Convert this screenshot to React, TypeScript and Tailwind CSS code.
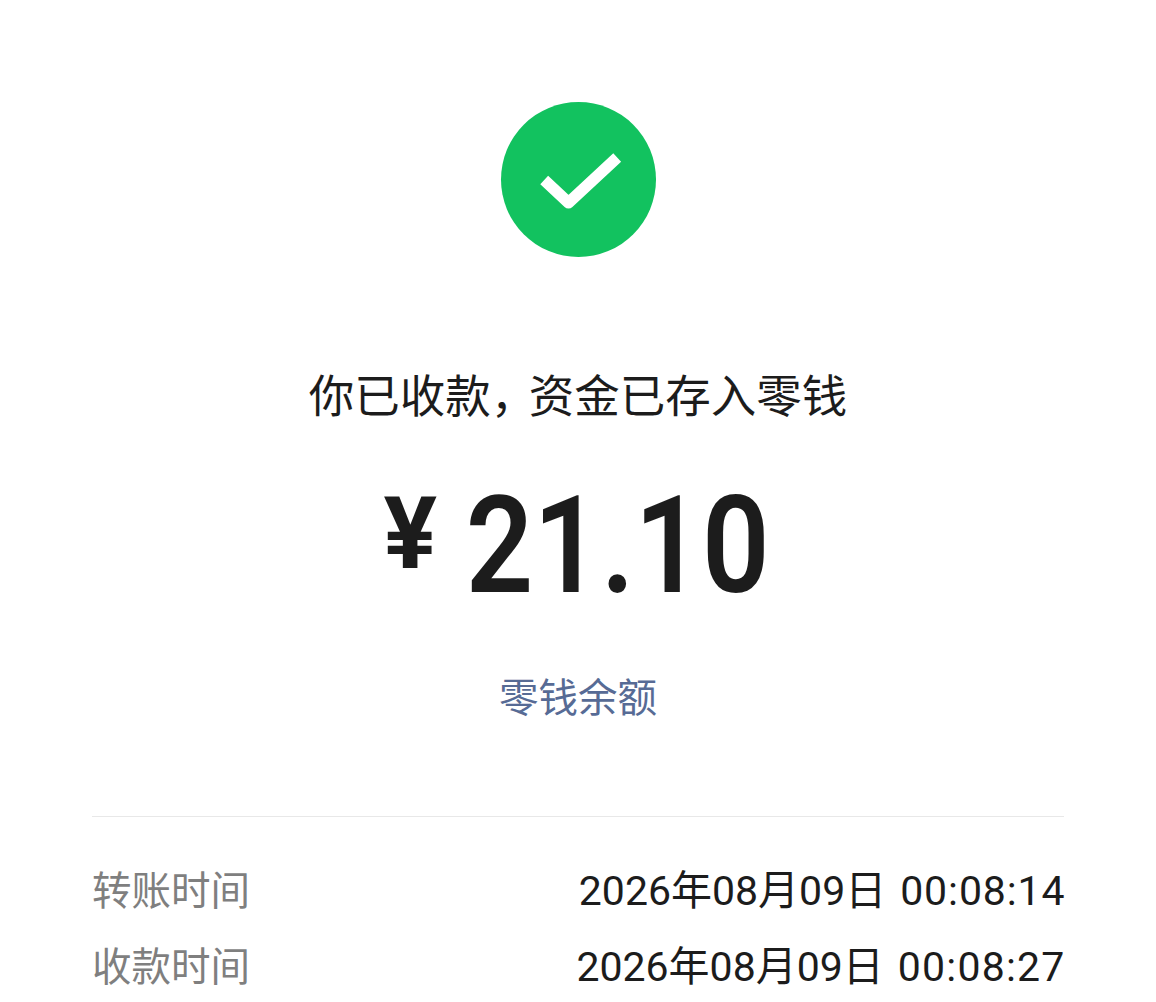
const cjk = "font-['Roboto','Noto_Sans_CJK_SC',sans-serif]";

const rows = [
  { label: "转账时间", date: "2026年08月09日", time: "00:08:14", tracking: "tracking-[0.9px]" },
  { label: "收款时间", date: "2026年08月09日", time: "00:08:27", tracking: "tracking-[1.2px]" },
];

export default function App() {
  return (
    <div className={`h-[1002px] w-full overflow-hidden bg-white ${cjk}`}>
      <div className="flex flex-col items-center pt-[102px]">
        <div className="h-[155px] w-[155px] rounded-full bg-[#12c25f]">
          <svg width="155" height="155" viewBox="0 0 155 155" fill="none">
            <path d="M43.2 78 L67.5 100.7 L116.2 55.5" stroke="white" strokeWidth="11.5" strokeLinejoin="round" />
          </svg>
        </div>
        <p className="mt-[114px] text-[45.5px] leading-[54px] text-[#1c1c1c]">
          你已收款<span className="tracking-[-7.5px]">，</span>资金已存入零钱
        </p>
        <div className="mt-[56px] flex h-[130px] items-center text-[#1c1c1c]">
          <span className="mb-[24px] text-[100px] leading-[130px] font-bold">¥</span>
          <span className="mr-[-20px] ml-[6px] scale-x-[0.87] text-[136px] leading-[130px] font-semibold">21.10</span>
        </div>
        <p className="mt-[64px] text-[39.5px] leading-[48px] text-[#576b95]">零钱余额</p>
      </div>
      <div className="mx-[92px] mt-[93px] border-t border-[#e8e8e8] pt-[49px]">
        {rows.map((row, i) => (
          <div key={row.label} className={`flex h-[52px] items-center justify-between ${i > 0 ? "mt-[24px]" : ""}`}>
            <span className="text-[39.5px] text-[#7f7f7f]">{row.label}</span>
            <span className="mr-[-1.5px] flex gap-[14px] text-[41px] text-[#1c1c1c]">
              <span>{row.date}</span>
              <span className={row.tracking}>{row.time}</span>
            </span>
          </div>
        ))}
      </div>
    </div>
  );
}
